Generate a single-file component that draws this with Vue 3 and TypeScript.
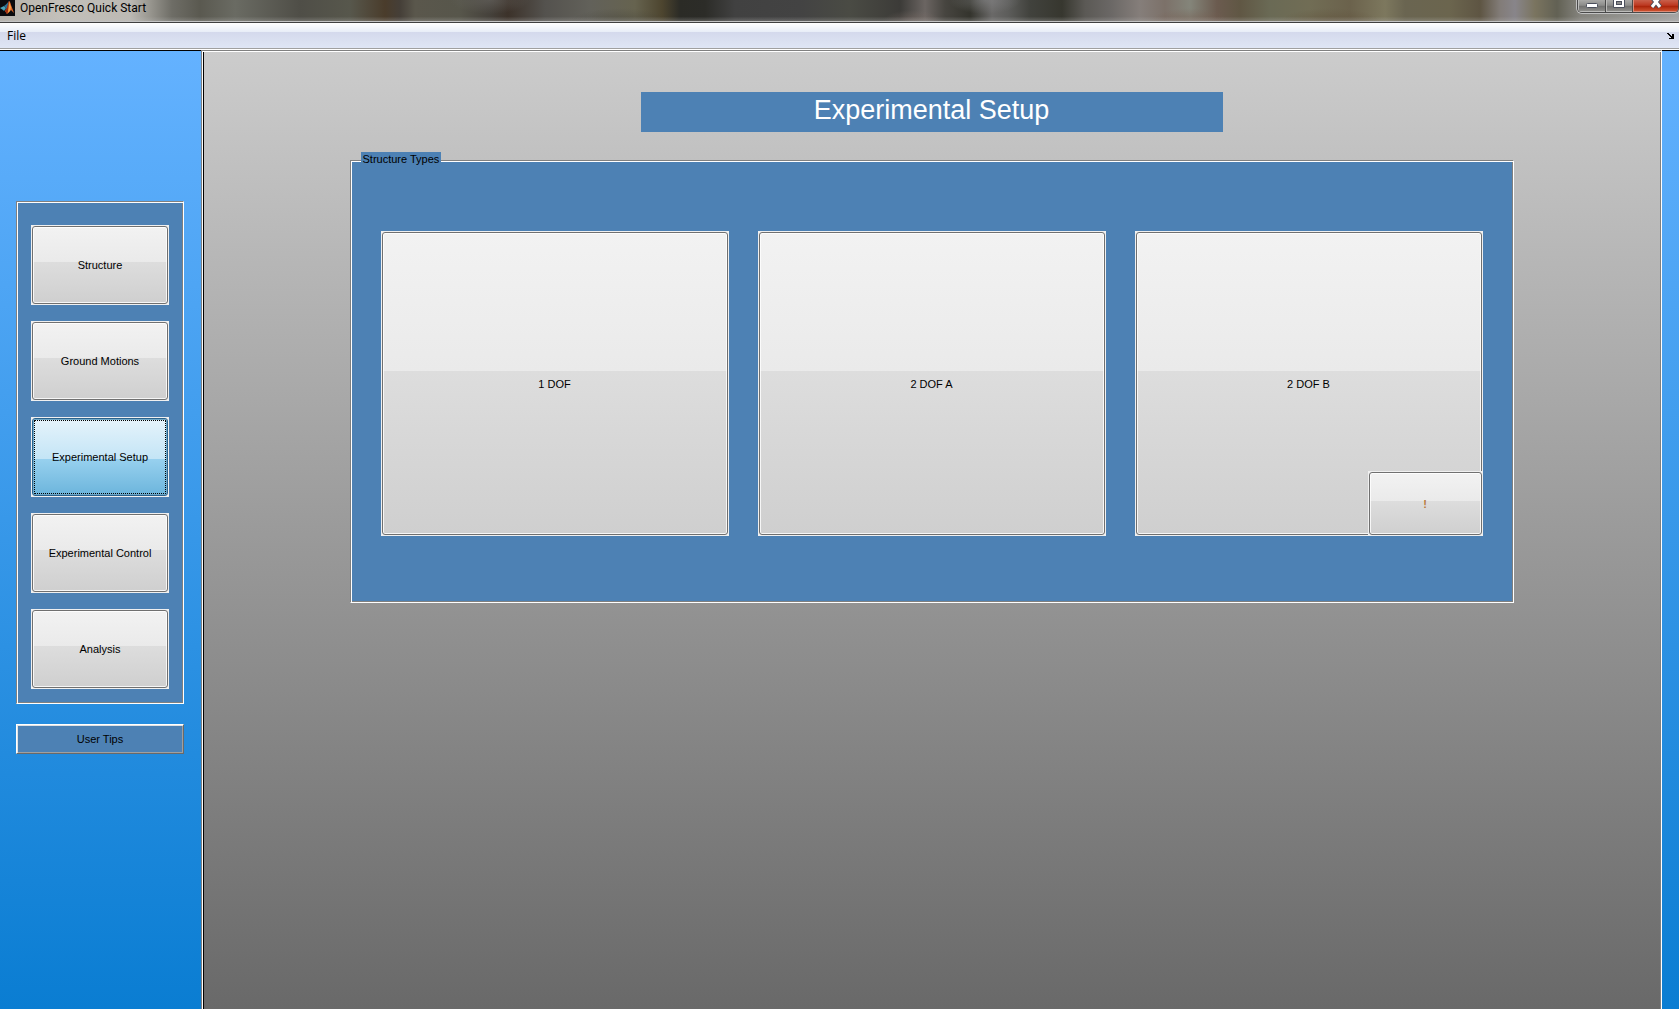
<script setup lang="ts">
import { ref } from 'vue'

interface Step {
  id: string
  label: string
}

const steps: Step[] = [
  { id: 'structure', label: 'Structure' },
  { id: 'motions', label: 'Ground Motions' },
  { id: 'setup', label: 'Experimental Setup' },
  { id: 'control', label: 'Experimental Control' },
  { id: 'analysis', label: 'Analysis' },
]

const structureTypes: string[] = ['1 DOF', '2 DOF A', '2 DOF B']

const activeStep = ref<string>('setup')
</script>

<template>
  <div class="window">
    <header class="titlebar">
      <svg class="logo" viewBox="0 0 15 16" width="15" height="16" aria-hidden="true">
        <rect width="15" height="16" fill="#0b0b0e" />
        <path d="M0 8 L4 6 L6 8 L4 11 L3 10 Z" fill="#4aa3b8" />
        <path d="M4 6 Q6 5 9 1 L7 8 L4 11 L6 8 Z" fill="#2c6f94" />
        <path d="M9 1 Q10 1 11 5 L14 13 L11 10 L7 14 L5 11 L7 8 Z" fill="#e0672a" />
        <path d="M9 1 L9 8 L7 14 L5 11 L7 8 Z" fill="#9c2d12" />
        <path d="M9 2 L11 7 L10 11 L8 13 Z" fill="#f6a545" />
      </svg>
      <span class="caption">OpenFresco Quick Start</span>
      <div class="controls">
        <button class="control" type="button" aria-label="Minimize">
          <svg viewBox="0 0 27 13" width="27" height="13">
            <rect x="8.500" y="3.500" width="11" height="4" rx="1" fill="#fff" stroke="#4b4f5c" />
          </svg>
        </button>
        <button class="control" type="button" aria-label="Maximize">
          <svg viewBox="0 0 26 13" width="26" height="13">
            <path d="M7.500-2V7.500H18.500V-2Z" fill="#fff" stroke="#4b4f5c" />
            <rect x="10.500" y="1.500" width="5" height="3" fill="#8b8b8b" stroke="#4b4f5c" />
          </svg>
        </button>
        <button class="control close" type="button" aria-label="Close">
          <svg viewBox="0 0 45 13" width="45" height="13">
            <path d="M19-3L27 7M27-3L19 7" stroke="#4b4f5c" stroke-width="5" />
            <path d="M19-3L27 7M27-3L19 7" stroke="#fff" stroke-width="3" />
          </svg>
        </button>
      </div>
    </header>

    <nav class="menubar">
      <button class="menu" type="button">File</button>
      <button class="dock" type="button" aria-label="Dock figure">
        <svg viewBox="0 0 7 6" width="7" height="6" shape-rendering="crispEdges">
          <path d="M0 0H2V1H3V2H4V3H5V1H7V6H2V5H4V4H3V3H2V2H1V1H0Z" fill="#000" />
        </svg>
      </button>
    </nav>

    <div class="body">
      <aside class="sidebar">
        <div class="steps etched">
          <button
            v-for="step in steps"
            :key="step.id"
            type="button"
            class="push step"
            :class="{ active: step.id === activeStep }"
            @click="activeStep = step.id"
          >
            <span class="face">{{ step.label }}</span>
          </button>
        </div>
        <button class="tips" type="button">User Tips</button>
      </aside>

      <main class="main">
        <div class="content">
          <h1 class="heading">Experimental Setup</h1>
          <fieldset class="types etched">
            <legend>Structure Types</legend>
            <div class="cards">
              <div v-for="kind in structureTypes" :key="kind" class="card">
                <button class="push type" type="button">
                  <span class="face">{{ kind }}</span>
                </button>
                <button v-if="kind === '2 DOF B'" class="push note" type="button">
                  <span class="face">!</span>
                </button>
              </div>
            </div>
          </fieldset>
        </div>
      </main>
    </div>
  </div>
</template>

<style>
body {
  margin: 0;
}
</style>

<style scoped>
.window {
  display: flex;
  flex-direction: column;
  min-height: 100vh;
  font: 11px/14px 'Liberation Sans', Arial, sans-serif;
  color: #000;
}

button {
  margin: 0;
  padding: 0;
  border: 0;
  background: none;
  font: inherit;
  color: inherit;
}

.titlebar {
  display: flex;
  align-items: flex-start;
  height: 21px;
  border-bottom: 1px solid #404040;
  box-shadow: inset 0 -1px #c4c4c4;
  box-sizing: content-box;
  padding-bottom: 1px;
  overflow: hidden;
  background:
    linear-gradient(transparent 75%, rgba(190, 190, 190, 0.35)),
    radial-gradient(40px 14px at 490px 0, rgba(110, 108, 104, 0.5), transparent),
    radial-gradient(50px 14px at 620px 22px, rgba(60, 58, 50, 0.4), transparent),
    radial-gradient(36px 14px at 985px 0, rgba(140, 140, 142, 0.5), transparent),
    radial-gradient(30px 12px at 912px 22px, rgba(130, 115, 108, 0.5), transparent),
    radial-gradient(40px 14px at 1190px 22px, rgba(118, 94, 82, 0.6), transparent),
    radial-gradient(50px 14px at 1330px 22px, rgba(96, 82, 60, 0.6), transparent),
    linear-gradient(90deg,
      #b5b2ab 0, #c3c0ba 60px, #bcb9b3 130px, #98968f 150px, #6e6d66 172px,
      #5a5950 200px, #6a6b63 235px, #4f4e47 300px, #57574c 350px, #4a3c2b 385px,
      #453f38 400px, #5a574c 415px, #57564b 460px, #45413b 490px, #3c322a 508px,
      #54524e 545px, #62615a 590px, #66634f 635px, #4d452f 662px, #2b2b26 680px,
      #2c2c28 705px, #414141 735px, #434343 800px, #4a4b44 850px, #3c3b38 900px,
      #6b6562 925px, #474540 945px, #34342d 970px, #6a6968 992px, #5d5d5b 1008px,
      #41423d 1030px, #37372f 1062px, #5b5955 1085px, #6a6765 1110px,
      #857e7a 1140px, #7c7169 1165px, #84857a 1190px, #6b5b4f 1217px,
      #605744 1240px, #6a6a55 1270px, #716d55 1310px, #6b624c 1350px,
      #7d785e 1385px, #6a6551 1405px, #6b654e 1450px, #5e5543 1480px,
      #827c78 1500px, #88858a 1515px, #7a745f 1535px, #626154 1557px,
      #84837d 1580px, #989894 1640px, #a5a5a5 1679px);
}

.logo {
  flex: none;
}

.caption {
  flex: 1;
  padding-left: 5px;
  font: 12px/16px Roboto, 'Open Sans', sans-serif;
}

.controls {
  display: flex;
  border: 1px solid #4a4a4a;
  border-top: 0;
  border-radius: 0 0 5px 5px;
  box-shadow: 0 0 0 1px #c2c2c2;
  overflow: hidden;
}

.control {
  display: block;
  height: 12px;
  border-right: 1px solid #4a4a4a;
  background: linear-gradient(#a9a9a7, #8c8c8a 45%, #70706f 50%, #93938f);
  box-shadow: inset 1px -1px #bdbdbb;
  overflow: hidden;
}

.control svg {
  display: block;
}

.close {
  border-right: 0;
  background: linear-gradient(#c9604b, #bc3820 45%, #a92208 50%, #d45a36);
  box-shadow: inset 1px -1px #dd8d78;
}

.menubar {
  display: flex;
  align-items: center;
  justify-content: space-between;
  height: 25px;
  padding: 0 5px 0 7px;
  border-bottom: 1px solid #a0a0a0;
  background: linear-gradient(#fff, #e8edf7 9px, #d4d9ec 9px, #dfe6f5);
}

.menu {
  font: 12px/16px 'Open Sans', 'Noto Sans', sans-serif;
}

.dock svg {
  display: block;
}

.body {
  display: flex;
  flex: 1;
  padding-right: 17px;
  border-top: 1px solid #fff;
  background: linear-gradient(#64b2ff, #0a7dd2);
  box-shadow: inset 0 1px #000;
}

.sidebar {
  box-sizing: border-box;
  width: 201px;
  padding: 151px 17px 0 16px;
}

.etched {
  border: 1px solid;
  border-color: #808080 #fff #fff #808080;
  box-shadow: inset 1px 1px #fff, inset -1px -1px #808080;
  background: #4d81b4;
}

.steps {
  display: flex;
  flex-direction: column;
  gap: 16px;
  padding: 23px 14px 14px;
}

.push {
  display: block;
  box-sizing: border-box;
  width: 100%;
  padding: 1px;
  background: #f0f0f0;
}

.face {
  display: flex;
  align-items: center;
  justify-content: center;
  box-sizing: border-box;
  height: 100%;
  border: 1px solid #707070;
  border-radius: 3px;
  box-shadow: inset 0 0 0 1px rgba(255, 255, 255, 0.8);
  background: linear-gradient(#f2f2f2, #eaeaea 46%, #dddddd 46%, #cfcfcf);
}

.step {
  height: 80px;
}

.active .face {
  border-color: #2c628b;
  outline: 1px dotted #000;
  outline-offset: -3px;
  box-shadow: inset 0 0 0 1px #6fa9c9;
  background: linear-gradient(#e5f3fb, #c4e5f6 52%, #98d1ef 52%, #6cb5dc);
}

.tips {
  box-sizing: border-box;
  width: 100%;
  height: 30px;
  margin-top: 20px;
  border: 1px solid;
  border-color: #fff #696969 #696969 #fff;
  box-shadow: inset 1px 1px #e3e3e3, inset -1px -1px #a0a0a0;
  background: #4d81b4;
}

.main {
  flex: 1;
  display: flex;
  padding: 1px 0 0 1px;
  border-top: 1px solid #808080;
  border-left: 1px solid #808080;
  border-right: 1px solid #fff;
  box-shadow: inset 1px 1px #fff, inset -1px 0 #808080;
  background: linear-gradient(#cccccc, #696969);
}

.content {
  flex: 1;
  display: flex;
  flex-direction: column;
  align-items: center;
  padding: 40px 2px 0 0;
  border-left: 1px solid #000;
}

.heading {
  box-sizing: border-box;
  width: 40%;
  height: 40px;
  margin: 0;
  background: #4d81b4;
  font-size: 27px;
  font-weight: 400;
  line-height: 36px;
  text-align: center;
  color: #fff;
}

.types {
  box-sizing: border-box;
  width: 80%;
  margin: 20px 0;
  padding: 62px 30px 66px;
}

.types legend {
  height: 17px;
  margin-left: -20px;
  padding: 0 2px;
  background: #4d81b4;
  line-height: 15px;
}

.cards {
  display: flex;
  gap: 29px;
}

.card {
  position: relative;
  flex: 1;
}

.type {
  height: 305px;
}

.note {
  position: absolute;
  right: 0;
  bottom: 0;
  width: 33%;
  height: 65px;
  font-weight: 700;
  color: #b87a3c;
}
</style>
